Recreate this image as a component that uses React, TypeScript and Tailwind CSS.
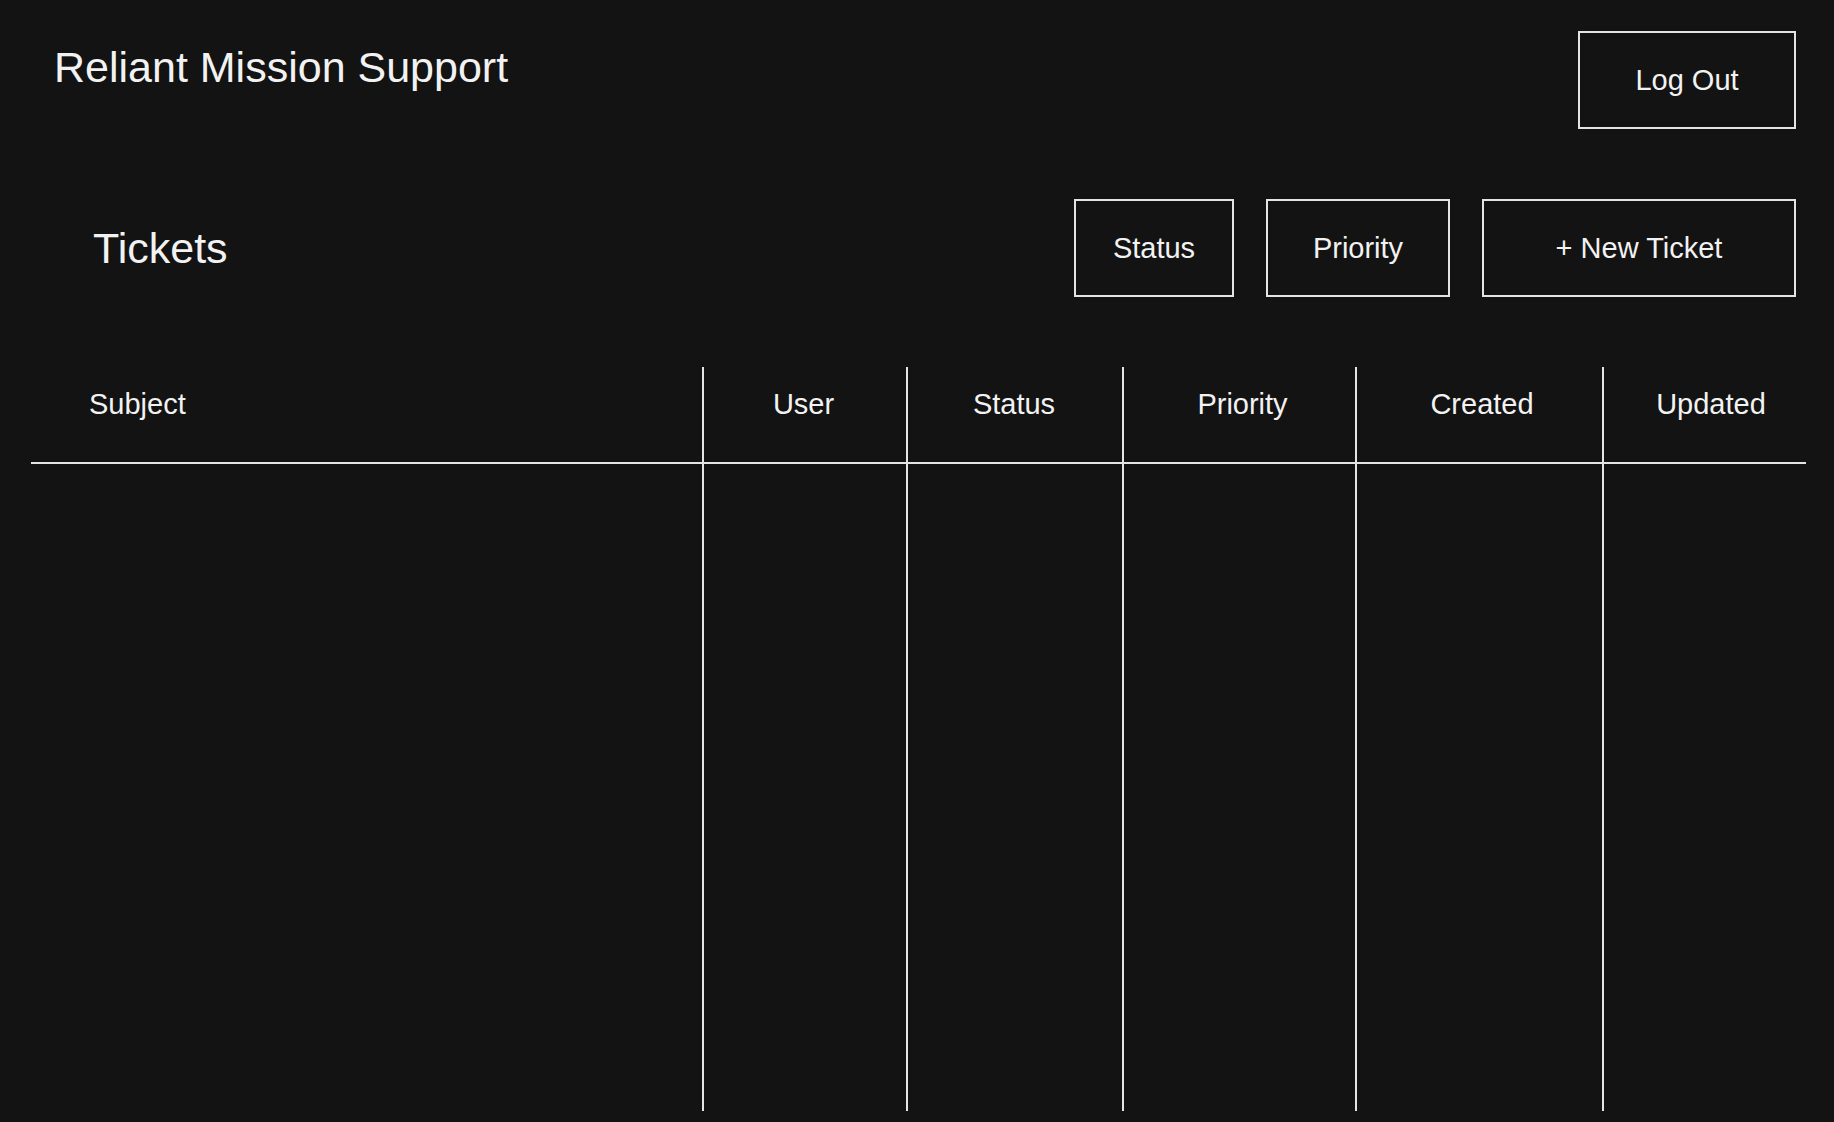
const COLUMNS = [
  { label: "Subject", nudge: "pl-[58px] text-left" },
  { label: "User", nudge: "border-l-2 pr-[3px] text-center" },
  { label: "Status", nudge: "border-l-2 pr-[2px] text-center" },
  { label: "Priority", nudge: "border-l-2 pl-[6px] text-center" },
  { label: "Created", nudge: "border-l-2 pl-[5px] text-center" },
  { label: "Updated", nudge: "border-l-2 pl-[12px] text-center" },
];

const FILTERS = [
  { label: "Status", width: "w-[160px]" },
  { label: "Priority", width: "w-[184px]" },
  { label: "+ New Ticket", width: "w-[314px]" },
];

function OutlineButton({
  label,
  className = "",
}: {
  label: string;
  className?: string;
}) {
  return (
    <button
      type="button"
      className={`box-border h-[98px] border-2 border-[#e4e4e4] text-[29px] leading-[33px] text-[#f2f2f2] ${className}`}
    >
      {label}
    </button>
  );
}

export default function App() {
  return (
    <div className="min-h-screen bg-[#131313] font-['Liberation_Sans',Arial,sans-serif] text-[#f2f2f2]">
      <header className="flex items-start justify-between pl-[54px] pr-[38px] pt-[31px]">
        <h1 className="mt-[11px] text-[43px] leading-[50px]">
          Reliant Mission Support
        </h1>
        <OutlineButton label="Log Out" className="w-[218px]" />
      </header>

      <section className="mt-[70px] flex items-center justify-between pl-[93px] pr-[38px]">
        <h2 className="text-[43px] leading-[49px]">Tickets</h2>
        <div className="flex gap-[32px]">
          {FILTERS.map((filter) => (
            <OutlineButton
              key={filter.label}
              label={filter.label}
              className={filter.width}
            />
          ))}
        </div>
      </section>

      <div className="ml-[31px] mt-[70px] grid w-[1775px] grid-cols-[671px_204px_216px_233px_247px_204px]">
        {COLUMNS.map((column) => (
          <div
            key={column.label}
            className={`box-border h-[97px] border-b-2 border-[#e4e4e4] pt-[21px] text-[29px] leading-[33px] ${column.nudge}`}
          >
            {column.label}
          </div>
        ))}
        {COLUMNS.map((column, i) => (
          <div
            key={`${column.label}-body`}
            className={`h-[647px] border-[#e4e4e4] ${i === 0 ? "" : "border-l-2"}`}
          />
        ))}
      </div>
    </div>
  );
}
